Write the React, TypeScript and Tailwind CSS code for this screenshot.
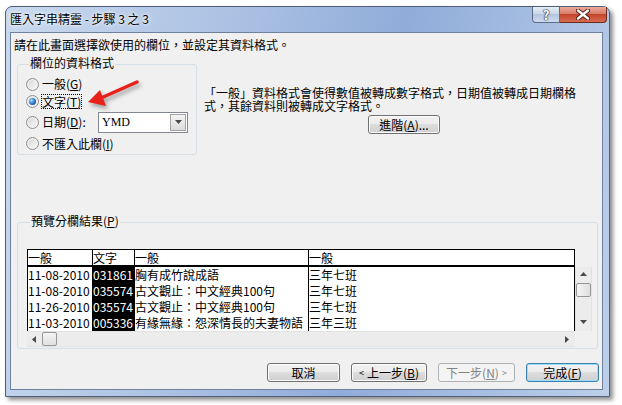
import type { ReactNode } from "react";

const cols = ["w-[65px]", "w-[42px]", "w-[174px]", "w-[266px]"];

const rows = [
  ["11-08-2010", "031861", "胸有成竹說成語", "三年七班"],
  ["11-08-2010", "035574", "古文觀止：中文經典100句", "三年七班"],
  ["11-26-2010", "035574", "古文觀止：中文經典100句", "三年七班"],
  ["11-03-2010", "005336", "有緣無緣：怨深情長的夫妻物語", "三年三班"],
];

function U({ c }: { c: string }) {
  return <span className="underline underline-offset-[1px]">{c}</span>;
}

function Radio({ checked = false }: { checked?: boolean }) {
  return (
    <span className="flex items-center justify-center w-[13px] h-[13px] rounded-full border border-[#8e8f8f] bg-[linear-gradient(135deg,#d6d6d6,#fbfbfb)] shadow-[inset_0_0_0_1px_#f2f2f2]">
      {checked && (
        <span className="w-[7px] h-[7px] rounded-full bg-[radial-gradient(circle_at_35%_35%,#a8dcff,#2a72c0_55%,#0e3a78)]" />
      )}
    </span>
  );
}

function Btn({
  children,
  w,
  kind = "normal",
}: {
  children: ReactNode;
  w: string;
  kind?: "normal" | "default" | "disabled";
}) {
  const look =
    kind === "disabled"
      ? "border-[#adb2b5] bg-[#f4f4f4] text-[#838383]"
      : kind === "default"
      ? "border-[#3c7fb1] bg-[linear-gradient(#f2f2f2,#ebebeb_50%,#dddddd_50%,#cfcfcf)] shadow-[inset_0_0_0_1px_#97e0fb]"
      : "border-[#707070] bg-[linear-gradient(#f2f2f2,#ebebeb_50%,#dddddd_50%,#cfcfcf)] shadow-[inset_0_0_0_1px_#fcfcfc]";
  return (
    <div
      className={`${w} h-[19px] flex items-center justify-center rounded-[3px] border leading-[12px] ${look}`}
    >
      {children}
    </div>
  );
}

function Tri({ dir }: { dir: "up" | "down" | "left" | "right" }) {
  const pts = {
    up: "0,4 3.5,0 7,4",
    down: "0,0 7,0 3.5,4",
    left: "4,0 4,7 0,3.5",
    right: "0,0 4,3.5 0,7",
  }[dir];
  const v = dir === "up" || dir === "down";
  return (
    <svg width={v ? 7 : 4} height={v ? 4 : 7} viewBox={v ? "0 0 7 4" : "0 0 4 7"}>
      <polygon points={pts} fill="#4a4a4a" />
    </svg>
  );
}

export default function App() {
  return (
    <div className="relative w-[622px] h-[405px] bg-white pl-[5px] pt-[6px] overflow-hidden font-['Noto_Sans_CJK_TC','Noto_Sans_CJK_SC',sans-serif] text-[12px] leading-[12px] text-black">
      {/* window */}
      <div className="w-[605px] h-[391px] rounded-t-[7px] border border-[#4f5f78] shadow-[3px_3px_4px_rgba(0,0,0,0.45)] bg-[linear-gradient(100deg,#c9d9ee_0%,#abc1e3_35%,#90acd9_60%,#bccfea_100%)] flex flex-col">
        {/* title bar */}
        <div className="h-[25px] flex justify-between">
          <span className="pl-[4px] pt-[6px] [text-shadow:0_0_5px_#fff,0_0_3px_#fff]">
            匯入字串精靈 - 步驟 3 之 3
          </span>
          <div className="flex h-[16px] mr-[2px]">
            <div className="w-[28px] h-full rounded-bl-[4px] border border-t-0 border-[#5d6d85] bg-[linear-gradient(#e6edf7,#cbd8ea_45%,#b3c6e0_50%,#cddbee)] flex items-center justify-center text-white font-bold text-[13px] leading-[13px] [text-shadow:0_0_1px_#23324a,0_0_1px_#23324a,0_0_2px_#23324a]">
              ?
            </div>
            <div className="w-[47px] h-full rounded-br-[4px] border border-t-0 border-l-0 border-[#6a2a20] bg-[linear-gradient(#eaab9c,#d67a64_45%,#c4452d_50%,#d66b50)] flex items-center justify-center">
              <svg width="14" height="11" viewBox="0 0 14 11">
                <path d="M2 1.5 L12 9.5 M12 1.5 L2 9.5" stroke="#4a1a12" strokeWidth="4.2" strokeLinecap="round" />
                <path d="M2 1.5 L12 9.5 M12 1.5 L2 9.5" stroke="#fff" strokeWidth="2.4" strokeLinecap="round" />
              </svg>
            </div>
          </div>
        </div>

        {/* client area */}
        <div className="ml-[4px] w-[593px] h-[358px] border border-[#6e82a0] bg-[#f0f0f0] flex flex-col">
          <p className="mt-[6px] ml-[3px]">請在此畫面選擇欲使用的欄位，並設定其資料格式。</p>

          <div className="flex mt-[6px] ml-[6px]">
            <fieldset className="w-[180px] border border-[#d5dfe5] rounded-[3px] pl-[8px] pt-[5px]">
              <legend className="ml-[3px] px-[1px] pb-[2px] leading-[12px]">欄位的資料格式</legend>
              <div className="flex items-center h-[16px]">
                <Radio />
                <span className="ml-[3px]">
                  一般(<U c="G" />)
                </span>
              </div>
              <div className="flex items-center h-[19px]">
                <Radio checked />
                <span className="ml-[2px] border border-dotted border-black leading-[13px]">
                  文字(<U c="T" />)
                </span>
              </div>
              <div className="flex items-center h-[22px]">
                <Radio />
                <span className="ml-[3px] w-[56px]">
                  日期(<U c="D" />):
                </span>
                <div className="w-[90px] h-[21px] border border-[#828790] bg-white flex items-center justify-between">
                  <span className="pl-[3px] font-['Liberation_Serif',serif] text-[12px]">YMD</span>
                  <div className="w-[16px] h-[17px] mr-[1px] border border-[#a3a3a3] bg-[linear-gradient(#f4f4f4,#dcdcdc)] flex items-center justify-center">
                    <Tri dir="down" />
                  </div>
                </div>
              </div>
              <div className="flex items-center h-[21px]">
                <Radio />
                <span className="ml-[3px]">
                  不匯入此欄(<U c="I" />)
                </span>
              </div>
            </fieldset>

            <div className="ml-[7px] mt-[29px]">
              <p className="whitespace-nowrap leading-[13px]">
                「一般」資料格式會使得數值被轉成數字格式，日期值被轉成日期欄格
                <br />
                式，其餘資料則被轉成文字格式。
              </p>
              <div className="ml-[164px] mt-[3px]">
                <Btn w="w-[72px]">
                  進階(<U c="A" />)...
                </Btn>
              </div>
            </div>
          </div>

          <fieldset className="mt-[60px] ml-[6px] w-[581px] border border-[#d5dfe5] rounded-[3px] pl-[9px] pb-[1px]">
            <legend className="ml-[3px] px-[1px] pb-[2px] leading-[12px]">
              預覽分欄結果(<U c="P" />)
            </legend>
            <div className="mt-[20px] flex flex-col">
              {/* header */}
              <div className="w-[548px] h-[18px] flex border-t border-l border-b-2 border-black bg-white">
                {["一般", "文字", "一般", "一般"].map((h, i) => (
                  <div key={i} className={`${cols[i]} h-full border-r border-black leading-[15px]`}>
                    {h}
                  </div>
                ))}
              </div>
              {/* body */}
              <div className="flex">
                <div className="w-[548px] h-[64px] border-l border-black bg-white overflow-hidden">
                  {rows.map((r, ri) => (
                    <div key={ri} className="flex h-[16px]">
                      {r.map((c, ci) => (
                        <div
                          key={ci}
                          className={`${cols[ci]} h-full border-r border-black leading-[16px] whitespace-nowrap overflow-hidden ${
                            ci === 1 ? "bg-black text-white" : ""
                          }`}
                        >
                          {c}
                        </div>
                      ))}
                    </div>
                  ))}
                </div>
                <div className="w-[17px] h-[64px] bg-[#ececec] border-x border-[#e2e2e2] flex flex-col items-center">
                  <div className="h-[14px] flex items-center">
                    <Tri dir="up" />
                  </div>
                  <div className="mt-[2px] w-[15px] h-[14px] rounded-[2px] border border-[#979797] bg-[linear-gradient(to_right,#f4f4f4,#e0e0e0)]" />
                  <div className="flex-1" />
                  <div className="h-[18px] flex items-center">
                    <Tri dir="down" />
                  </div>
                </div>
              </div>
              {/* horizontal scrollbar */}
              <div className="flex">
                <div className="w-[548px] h-[16px] bg-[#ececec] border-y border-[#e2e2e2] flex items-center">
                  <div className="w-[14px] flex justify-center">
                    <Tri dir="left" />
                  </div>
                  <div className="ml-[1px] w-[15px] h-[14px] rounded-[2px] border border-[#979797] bg-[linear-gradient(#f4f4f4,#e0e0e0)]" />
                  <div className="flex-1" />
                  <div className="w-[16px] flex justify-center">
                    <Tri dir="right" />
                  </div>
                </div>
                <div className="w-[17px] h-[16px]" />
              </div>
            </div>
          </fieldset>

          <div className="flex justify-end gap-[11px] mt-[14px] mr-[3px]">
            <Btn w="w-[73px]">取消</Btn>
            <Btn w="w-[76px]">
              <span className="text-[9px] mr-[3px]">&lt;</span>上一步(<U c="B" />)
            </Btn>
            <Btn w="w-[77px]" kind="disabled">
              下一步(<U c="N" />)<span className="text-[9px] ml-[3px]">&gt;</span>
            </Btn>
            <Btn w="w-[73px]" kind="default">
              完成(<U c="F" />)
            </Btn>
          </div>
        </div>
      </div>

      {/* red annotation arrow */}
      <svg
        className="absolute left-[84px] top-[76px] drop-shadow-[2px_3px_2px_rgba(0,0,0,0.35)]"
        width="60"
        height="36"
        viewBox="0 0 60 36"
      >
        <line x1="53" y1="6" x2="17" y2="22" stroke="#e8211a" strokeWidth="3.5" strokeLinecap="round" />
        <polygon points="4,26 16,14 22,30" fill="#e8211a" />
      </svg>
    </div>
  );
}
